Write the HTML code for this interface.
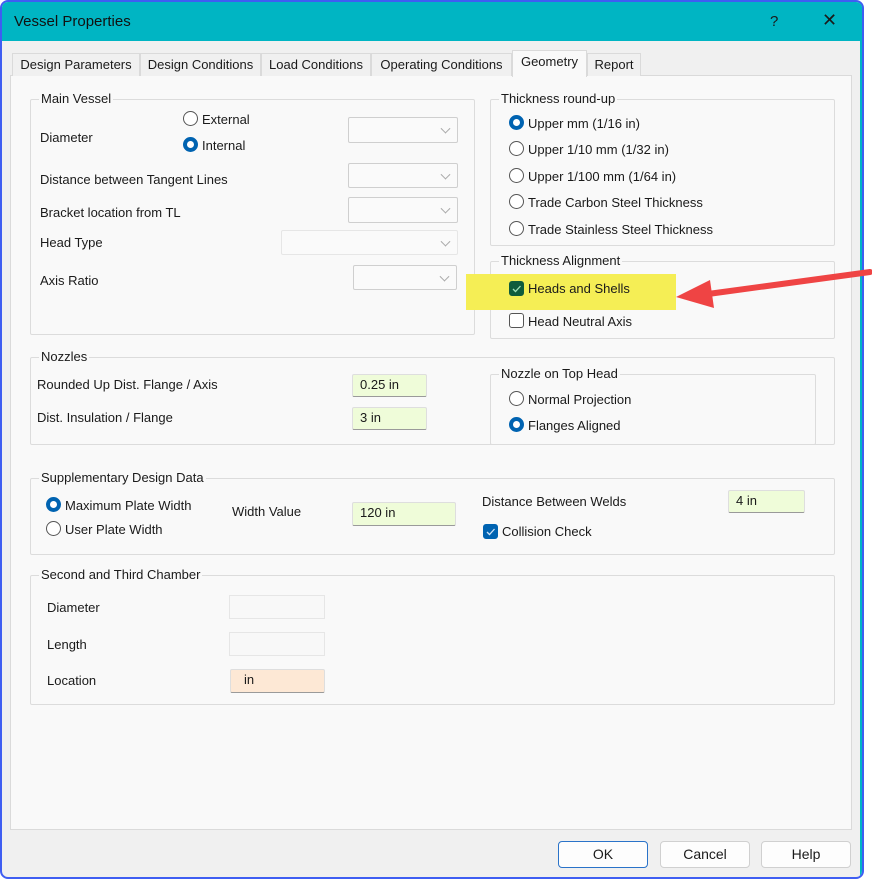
<!DOCTYPE html>
<html><head><meta charset="utf-8"><style>
*{box-sizing:border-box;margin:0;padding:0}
body{width:872px;height:880px;background:#fff;position:relative;overflow:hidden;font-family:"Liberation Sans",sans-serif;font-size:13px;color:#1a1a1a}
.a{position:absolute}
#win{left:0;top:0;width:864px;height:879px;border:2px solid #3f5ef2;border-radius:8px;background:#f0f0f0;overflow:hidden}
#title{left:0;top:0;width:860px;height:39px;background:#00b5c3}
.g{position:absolute;border:1px solid #dcdcdc;border-radius:2px}
.gl{position:absolute;top:-9px;left:8px;background:#f9f9f9;padding:0 2px;line-height:16px}
.t{position:absolute;white-space:nowrap;line-height:16px}
.cb{position:absolute;border:1px solid #cfcfcf;background:#fafafa;border-radius:2px}
.cb:after{content:"";position:absolute;right:8px;top:50%;width:6px;height:6px;border-right:1px solid #aaa;border-bottom:1px solid #aaa;transform:translateY(-70%) rotate(45deg)}
.in{position:absolute;border:1px solid #dedede;border-bottom:1px solid #9a9a9a;background:#effcd9;padding-left:7px;line-height:20px;border-radius:2px}
.r{position:absolute;width:15px;height:15px;border:1px solid #555;border-radius:50%;background:#fff}
.r.on{border:4px solid #0063b1;background:#fff}
.ck{position:absolute;width:15px;height:15px;border-radius:3px;border:1px solid #555;background:#fff}
.btn{position:absolute;top:841px;width:90px;height:27px;border:1px solid #d0d0d0;border-radius:4px;background:#fdfdfd;text-align:center;line-height:25px;font-size:14px}
.tab{position:absolute;top:53px;height:23px;border:1px solid #dadada;border-bottom:none;background:#f0f0f0;line-height:22px;text-align:center}
</style></head><body>
<div id="win" class="a">
<div id="title" class="a"></div>
<div class="t" style="left:12px;top:12px;font-size:15px;color:#111">Vessel Properties</div>
<div class="t" style="left:768px;top:12px;font-size:15px">?</div>
<div class="t" style="left:820px;top:10px;font-size:18px">✕</div>
<div class="a" style="left:858px;top:0;width:4px;height:880px;background:#00b5c3"></div>
</div>
<!-- tabs -->
<div class="a" style="left:10px;top:75px;width:842px;height:755px;background:#f9f9f9;border:1px solid #dadada"></div>
<div class="tab" style="left:12px;width:128px">Design Parameters</div>
<div class="tab" style="left:140px;width:121px">Design Conditions</div>
<div class="tab" style="left:261px;width:110px">Load Conditions</div>
<div class="tab" style="left:371px;width:141px">Operating Conditions</div>
<div class="tab" style="left:512px;top:50px;height:27px;width:75px;background:#f9f9f9">Geometry</div>
<div class="tab" style="left:587px;width:54px">Report</div>

<!-- Main vessel -->
<div class="g" style="left:30px;top:99px;width:445px;height:236px"><div class="gl">Main Vessel</div></div>
<div class="t" style="left:40px;top:130px">Diameter</div>
<div class="r" style="left:183px;top:111px"></div><div class="t" style="left:202px;top:112px">External</div>
<div class="r on" style="left:183px;top:137px"></div><div class="t" style="left:202px;top:138px">Internal</div>
<div class="cb" style="left:348px;top:117px;width:110px;height:26px"></div>
<div class="t" style="left:40px;top:172px">Distance between Tangent Lines</div>
<div class="cb" style="left:348px;top:163px;width:110px;height:25px"></div>
<div class="t" style="left:40px;top:205px">Bracket location from TL</div>
<div class="cb" style="left:348px;top:197px;width:110px;height:26px"></div>
<div class="t" style="left:40px;top:235px">Head Type</div>
<div class="cb" style="left:281px;top:230px;width:177px;height:25px;border-color:#e6e6e6"></div>
<div class="t" style="left:40px;top:273px">Axis Ratio</div>
<div class="cb" style="left:353px;top:265px;width:104px;height:25px"></div>

<!-- Thickness round-up -->
<div class="g" style="left:490px;top:99px;width:345px;height:147px"><div class="gl">Thickness round-up</div></div>
<div class="r on" style="left:509px;top:115px"></div><div class="t" style="left:528px;top:116px">Upper mm (1/16 in)</div>
<div class="r" style="left:509px;top:141px"></div><div class="t" style="left:528px;top:142px">Upper 1/10 mm (1/32 in)</div>
<div class="r" style="left:509px;top:168px"></div><div class="t" style="left:528px;top:169px">Upper 1/100 mm (1/64 in)</div>
<div class="r" style="left:509px;top:194px"></div><div class="t" style="left:528px;top:195px">Trade Carbon Steel Thickness</div>
<div class="r" style="left:509px;top:221px"></div><div class="t" style="left:528px;top:222px">Trade Stainless Steel Thickness</div>

<!-- Thickness alignment -->
<div class="g" style="left:490px;top:261px;width:345px;height:78px"><div class="gl">Thickness Alignment</div></div>
<div class="a" style="left:466px;top:274px;width:210px;height:36px;background:#f5ee55"></div>
<div class="ck" style="left:509px;top:281px;background:#0f5c3c;border-color:#0f5c3c"><svg width="13" height="13" style="position:absolute;left:0;top:0"><path d="M3 7 L5.5 9.5 L10.5 4" stroke="#9fe0b8" stroke-width="1.3" fill="none"/></svg></div>
<div class="t" style="left:528px;top:281px">Heads and Shells</div>
<div class="ck" style="left:509px;top:313px"></div><div class="t" style="left:528px;top:314px">Head Neutral Axis</div>
<svg class="a" style="left:660px;top:262px" width="212" height="50"><path d="M210 10 L48 32" stroke="#ef4444" stroke-width="6" stroke-linecap="round"/><path d="M16 35 L50 18 L54 46 Z" fill="#ef4444"/></svg>

<!-- Nozzles -->
<div class="g" style="left:30px;top:357px;width:805px;height:88px"><div class="gl">Nozzles</div></div>
<div class="t" style="left:37px;top:377px">Rounded Up Dist. Flange / Axis</div>
<div class="in" style="left:352px;top:374px;width:75px;height:23px">0.25 in</div>
<div class="t" style="left:37px;top:410px">Dist. Insulation / Flange</div>
<div class="in" style="left:352px;top:407px;width:75px;height:23px">3 in</div>
<div class="g" style="left:490px;top:374px;width:326px;height:71px"><div class="gl">Nozzle on Top Head</div></div>
<div class="r" style="left:509px;top:391px"></div><div class="t" style="left:528px;top:392px">Normal Projection</div>
<div class="r on" style="left:509px;top:417px"></div><div class="t" style="left:528px;top:418px">Flanges Aligned</div>

<!-- Supplementary -->
<div class="g" style="left:30px;top:478px;width:805px;height:77px"><div class="gl">Supplementary Design Data</div></div>
<div class="r on" style="left:46px;top:497px"></div><div class="t" style="left:65px;top:498px">Maximum Plate Width</div>
<div class="r" style="left:46px;top:521px"></div><div class="t" style="left:65px;top:522px">User Plate Width</div>
<div class="t" style="left:232px;top:504px">Width Value</div>
<div class="in" style="left:352px;top:502px;width:104px;height:24px">120 in</div>
<div class="t" style="left:482px;top:494px">Distance Between Welds</div>
<div class="in" style="left:728px;top:490px;width:77px;height:23px">4 in</div>
<div class="ck" style="left:483px;top:524px;background:#0063b1;border-color:#0063b1"><svg width="13" height="13" style="position:absolute;left:0;top:0"><path d="M3 7 L5.5 9.5 L10.5 4" stroke="#cfe3f7" stroke-width="1.3" fill="none"/></svg></div>
<div class="t" style="left:502px;top:524px">Collision Check</div>

<!-- Second and third -->
<div class="g" style="left:30px;top:575px;width:805px;height:130px"><div class="gl">Second and Third Chamber</div></div>
<div class="t" style="left:47px;top:600px">Diameter</div>
<div class="a" style="left:229px;top:595px;width:96px;height:24px;border:1px solid #e6e6e6;background:#f8f8f8"></div>
<div class="t" style="left:47px;top:637px">Length</div>
<div class="a" style="left:229px;top:632px;width:96px;height:24px;border:1px solid #e6e6e6;background:#f8f8f8"></div>
<div class="t" style="left:47px;top:673px">Location</div>
<div class="in" style="left:230px;top:669px;width:95px;height:24px;background:#fde8d5;padding-left:13px">in</div>

<!-- buttons -->
<div class="btn" style="left:558px;border:1px solid #2a73c9">OK</div>
<div class="btn" style="left:660px">Cancel</div>
<div class="btn" style="left:761px">Help</div>
</body></html>
